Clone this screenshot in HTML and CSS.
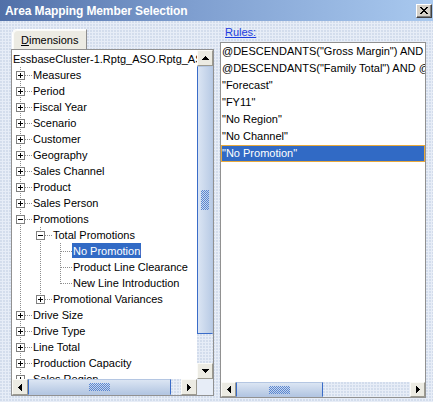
FILE: index.html
```html
<!DOCTYPE html>
<html>
<head>
<meta charset="utf-8">
<title>Area Mapping Member Selection</title>
<link rel="stylesheet" href="styles.css">
</head>
<body>
<div class="window">
  <div class="titlebar">
    <span class="title">Area Mapping Member Selection</span>
    <span class="close"><svg width="8" height="7" viewBox="0 0 8 7"><path d="M0 0h2v1h1v1h2V1h1V0h2v1H7v1H6v1H5v1h1v1h1v1h1v1H6V6H5V5H3v1H2v1H0V6h1V5h1V4h1V3H2V2H1V1H0z" fill="#000"/></svg></span>
  </div>
  <div class="content">
    <div class="left">
      <div class="tab"><u>D</u>imensions</div>
      <div class="panel tree-panel">
        <div class="tree">
          <div class="row"><span class="label">EssbaseCluster-1.Rptg_ASO.Rptg_ASO</span></div>
          <div class="row"><span class="g t"><svg class="box" width="9" height="9"><rect x="0.5" y="0.5" width="8" height="8" fill="#fff" stroke="#808080"/><path d="M2 4.5h5M4.5 2v5" stroke="#000"/></svg></span><span class="label">Measures</span></div>
          <div class="row"><span class="g t"><svg class="box" width="9" height="9"><rect x="0.5" y="0.5" width="8" height="8" fill="#fff" stroke="#808080"/><path d="M2 4.5h5M4.5 2v5" stroke="#000"/></svg></span><span class="label">Period</span></div>
          <div class="row"><span class="g t"><svg class="box" width="9" height="9"><rect x="0.5" y="0.5" width="8" height="8" fill="#fff" stroke="#808080"/><path d="M2 4.5h5M4.5 2v5" stroke="#000"/></svg></span><span class="label">Fiscal Year</span></div>
          <div class="row"><span class="g t"><svg class="box" width="9" height="9"><rect x="0.5" y="0.5" width="8" height="8" fill="#fff" stroke="#808080"/><path d="M2 4.5h5M4.5 2v5" stroke="#000"/></svg></span><span class="label">Scenario</span></div>
          <div class="row"><span class="g t"><svg class="box" width="9" height="9"><rect x="0.5" y="0.5" width="8" height="8" fill="#fff" stroke="#808080"/><path d="M2 4.5h5M4.5 2v5" stroke="#000"/></svg></span><span class="label">Customer</span></div>
          <div class="row"><span class="g t"><svg class="box" width="9" height="9"><rect x="0.5" y="0.5" width="8" height="8" fill="#fff" stroke="#808080"/><path d="M2 4.5h5M4.5 2v5" stroke="#000"/></svg></span><span class="label">Geography</span></div>
          <div class="row"><span class="g t"><svg class="box" width="9" height="9"><rect x="0.5" y="0.5" width="8" height="8" fill="#fff" stroke="#808080"/><path d="M2 4.5h5M4.5 2v5" stroke="#000"/></svg></span><span class="label">Sales Channel</span></div>
          <div class="row"><span class="g t"><svg class="box" width="9" height="9"><rect x="0.5" y="0.5" width="8" height="8" fill="#fff" stroke="#808080"/><path d="M2 4.5h5M4.5 2v5" stroke="#000"/></svg></span><span class="label">Product</span></div>
          <div class="row"><span class="g t"><svg class="box" width="9" height="9"><rect x="0.5" y="0.5" width="8" height="8" fill="#fff" stroke="#808080"/><path d="M2 4.5h5M4.5 2v5" stroke="#000"/></svg></span><span class="label">Sales Person</span></div>
          <div class="row"><span class="g t"><svg class="box" width="9" height="9"><rect x="0.5" y="0.5" width="8" height="8" fill="#fff" stroke="#808080"/><path d="M2 4.5h5" stroke="#000"/></svg></span><span class="label">Promotions</span></div>
          <div class="row"><span class="g v"></span><span class="g t"><svg class="box" width="9" height="9"><rect x="0.5" y="0.5" width="8" height="8" fill="#fff" stroke="#808080"/><path d="M2 4.5h5" stroke="#000"/></svg></span><span class="label">Total Promotions</span></div>
          <div class="row"><span class="g v"></span><span class="g v"></span><span class="g t"></span><span class="label selected">No Promotion</span></div>
          <div class="row"><span class="g v"></span><span class="g v"></span><span class="g t"></span><span class="label">Product Line Clearance</span></div>
          <div class="row"><span class="g v"></span><span class="g v"></span><span class="g l"></span><span class="label">New Line Introduction</span></div>
          <div class="row"><span class="g v"></span><span class="g l"><svg class="box" width="9" height="9"><rect x="0.5" y="0.5" width="8" height="8" fill="#fff" stroke="#808080"/><path d="M2 4.5h5M4.5 2v5" stroke="#000"/></svg></span><span class="label">Promotional Variances</span></div>
          <div class="row"><span class="g t"><svg class="box" width="9" height="9"><rect x="0.5" y="0.5" width="8" height="8" fill="#fff" stroke="#808080"/><path d="M2 4.5h5M4.5 2v5" stroke="#000"/></svg></span><span class="label">Drive Size</span></div>
          <div class="row"><span class="g t"><svg class="box" width="9" height="9"><rect x="0.5" y="0.5" width="8" height="8" fill="#fff" stroke="#808080"/><path d="M2 4.5h5M4.5 2v5" stroke="#000"/></svg></span><span class="label">Drive Type</span></div>
          <div class="row"><span class="g t"><svg class="box" width="9" height="9"><rect x="0.5" y="0.5" width="8" height="8" fill="#fff" stroke="#808080"/><path d="M2 4.5h5M4.5 2v5" stroke="#000"/></svg></span><span class="label">Line Total</span></div>
          <div class="row"><span class="g t"><svg class="box" width="9" height="9"><rect x="0.5" y="0.5" width="8" height="8" fill="#fff" stroke="#808080"/><path d="M2 4.5h5M4.5 2v5" stroke="#000"/></svg></span><span class="label">Production Capacity</span></div>
          <div class="row"><span class="g t"><svg class="box" width="9" height="9"><rect x="0.5" y="0.5" width="8" height="8" fill="#fff" stroke="#808080"/><path d="M2 4.5h5M4.5 2v5" stroke="#000"/></svg></span><span class="label">Sales Region</span></div>
        </div>
        <div class="vscroll">
          <div class="sbtn"><svg width="7" height="4" viewBox="0 0 7 4"><path d="M3 0h1v1h1v1h1v1h1v1H0V3h1V2h1V1h1z"/></svg></div>
          <div class="vthumb"><span class="grip vgrip"></span></div>
          <div class="track"></div>
          <div class="sbtn"><svg width="7" height="4" viewBox="0 0 7 4"><path d="M0 0h7v1H6v1H5v1H4v1H3V3H2V2H1V1H0z"/></svg></div>
        </div>
        <div class="hscroll">
          <div class="sbtn"><svg width="4" height="7" viewBox="0 0 4 7"><path d="M3 0h1v7H3V6H2V5H1V4H0V3h1V2h1V1h1z"/></svg></div>
          <div class="hthumb lthumb"><span class="grip hgrip"></span></div>
          <div class="track"></div>
          <div class="sbtn"><svg width="4" height="7" viewBox="0 0 4 7"><path d="M0 0h1v1h1v1h1v1h1v1H3v1H2v1H1v1H0z"/></svg></div>
        </div>
        <div class="corner"></div>
      </div>
    </div>
    <div class="right">
      <div class="rules-label">Rules:</div>
      <div class="panel rules-panel">
        <div class="list">
          <div class="item">@DESCENDANTS("Gross Margin") AND @DESCENDANTS("Gross Margin")</div>
          <div class="item">@DESCENDANTS("Family Total") AND @LEVMBRS("Product",0)</div>
          <div class="item">"Forecast"</div>
          <div class="item">"FY11"</div>
          <div class="item">"No Region"</div>
          <div class="item">"No Channel"</div>
          <div class="item selected">"No Promotion"</div>
        </div>
        <div class="hscroll small">
          <div class="sbtn"><svg width="4" height="7" viewBox="0 0 4 7"><path d="M3 0h1v7H3V6H2V5H1V4H0V3h1V2h1V1h1z"/></svg></div>
          <div class="hthumb rthumb"><span class="grip hgrip"></span></div>
          <div class="track"></div>
          <div class="sbtn"><svg width="4" height="7" viewBox="0 0 4 7"><path d="M0 0h1v1h1v1h1v1h1v1H3v1H2v1H1v1H0z"/></svg></div>
        </div>
      </div>
    </div>
  </div>
</div>
</body>
</html>
```

FILE: styles.css
```css
body {
  margin: 0;
}

.window {
  width: 433px;
  height: 402px;
  overflow: hidden;
  display: flex;
  flex-direction: column;
  font-family: "Liberation Sans", Arial, sans-serif;
  font-size: 11px;
  color: #000;
  background-color: #e7edf7;
  background-image: radial-gradient(circle at 1px 1px, #d3dcec 0.7px, transparent 1px);
  background-size: 3px 3px;
}

.titlebar {
  height: 21px;
  flex: none;
  display: flex;
  align-items: center;
  justify-content: space-between;
  padding: 0 1px 0 5px;
  background: linear-gradient(90deg, #5170a8 0%, #7f9fd0 45%, #a9c9ef 100%);
}

.title {
  color: #fff;
  font-weight: bold;
  font-size: 12px;
  letter-spacing: -0.1px;
}

.close {
  width: 16px;
  height: 14px;
  box-sizing: border-box;
  background: #d4d0c8;
  border: 1px solid;
  border-color: #fff #404040 #404040 #fff;
  box-shadow: inset -1px -1px #808080;
  display: flex;
  align-items: center;
  justify-content: center;
}

.close svg {
  display: block;
}

.content {
  flex: 1;
  display: flex;
  gap: 6px;
  padding-left: 11px;
}

.left {
  width: 203px;
  display: flex;
  flex-direction: column;
}

.tab {
  margin: 8px 0 0 1px;
  width: 75px;
  height: 20px;
  box-sizing: border-box;
  padding: 4px 0 0 8px;
  background: #ecebe3;
  border-top: 1px solid #fff;
  border-left: 1px solid #fff;
  border-right: 1px solid #8e8e8e;
  border-top-left-radius: 5px;
  box-shadow: inset 1px 1px #fbfbf8;
  line-height: 13px;
}

.tab u {
  text-decoration-thickness: 1px;
}

.panel {
  box-sizing: border-box;
  border: 1px solid #919191;
  background: #fff;
}

.tree-panel {
  width: 203px;
  height: 347px;
  display: grid;
  grid-template-columns: 185px 16px;
  grid-template-rows: 329px 16px;
}

.tree {
  overflow: hidden;
  padding-top: 1px;
  white-space: nowrap;
}

.row {
  display: flex;
  height: 16px;
}

.g {
  flex: none;
  width: 20px;
  height: 16px;
  display: block;
}

.g.v {
  background: repeating-linear-gradient(180deg, #8e8e8e 0 1px, transparent 1px 2px) 8px 0 / 1px 16px no-repeat;
}

.g.t {
  background:
    repeating-linear-gradient(90deg, #8e8e8e 0 1px, transparent 1px 2px) 9px 8px / 11px 1px no-repeat,
    repeating-linear-gradient(180deg, #8e8e8e 0 1px, transparent 1px 2px) 8px 0 / 1px 16px no-repeat;
}

.g.l {
  background:
    repeating-linear-gradient(90deg, #8e8e8e 0 1px, transparent 1px 2px) 9px 8px / 11px 1px no-repeat,
    repeating-linear-gradient(180deg, #8e8e8e 0 1px, transparent 1px 2px) 8px 0 / 1px 9px no-repeat;
}

.box {
  display: block;
  margin: 4px 0 0 4px;
}

.label {
  display: block;
  padding: 0 1px;
  height: 16px;
  line-height: 17px;
}

.label.selected {
  background: linear-gradient(#316ac5, #316ac5) 0 0 / 100% 15px no-repeat;
  color: #fff;
}

.vscroll {
  display: flex;
  flex-direction: column;
  background: #e7edf7;
}

.hscroll {
  display: flex;
  background: #e7edf7;
}

.sbtn {
  flex: none;
  width: 16px;
  height: 16px;
  box-sizing: border-box;
  background: #ecebe3;
  border: 1px solid;
  border-color: #fbfbf8 #9c9a90 #9c9a90 #fbfbf8;
  display: flex;
  align-items: center;
  justify-content: center;
}

.sbtn svg {
  display: block;
  fill: #000;
}

.vthumb {
  flex: none;
  height: 268px;
  box-sizing: border-box;
  border: 1px solid #b4c6e2;
  border-left-color: #3a6cc8;
  border-bottom-color: #3a6cc8;
  background: linear-gradient(90deg, #dbe5f3, #b9cbe5);
  display: flex;
  align-items: center;
  justify-content: center;
}

.hthumb {
  flex: none;
  box-sizing: border-box;
  border: 1px solid #b4c6e2;
  border-left-color: #3a6cc8;
  border-right-color: #3a6cc8;
  background: linear-gradient(180deg, #dbe5f3, #b3c6e2);
  display: flex;
  align-items: center;
  justify-content: center;
}

.lthumb {
  width: 143px;
}

.rthumb {
  width: 87px;
}

.track {
  flex: 1;
  background-color: #e7edf7;
  background-image: radial-gradient(circle at 1px 1px, #d3dcec 0.7px, transparent 1px);
  background-size: 3px 3px;
}

.grip {
  display: block;
  background: repeating-conic-gradient(#5a86d2 0 25%, transparent 0 50%) 0 0 / 2px 2px;
}

.vgrip {
  width: 8px;
  height: 20px;
}

.hgrip {
  width: 21px;
  height: 8px;
}

.corner {
  background-color: #e7edf7;
}

.right {
  width: 206px;
  display: flex;
  flex-direction: column;
}

.rules-label {
  height: 21px;
  display: flex;
  align-items: center;
  padding-left: 5px;
  color: #1d3ce0;
  text-decoration: underline;
}

.rules-panel {
  width: 206px;
  height: 356px;
  display: grid;
  grid-template-rows: 339px 15px;
  grid-template-columns: 204px;
}

.list {
  overflow: hidden;
  white-space: nowrap;
}

.item {
  height: 17px;
  line-height: 17px;
  padding-left: 1px;
  box-sizing: border-box;
}

.item.selected {
  background: #316ac5;
  color: #fff;
  border: 1px solid #e8a93c;
  line-height: 15px;
  padding-left: 0;
}

.hscroll.small .sbtn {
  width: 15px;
  height: 15px;
}
```
